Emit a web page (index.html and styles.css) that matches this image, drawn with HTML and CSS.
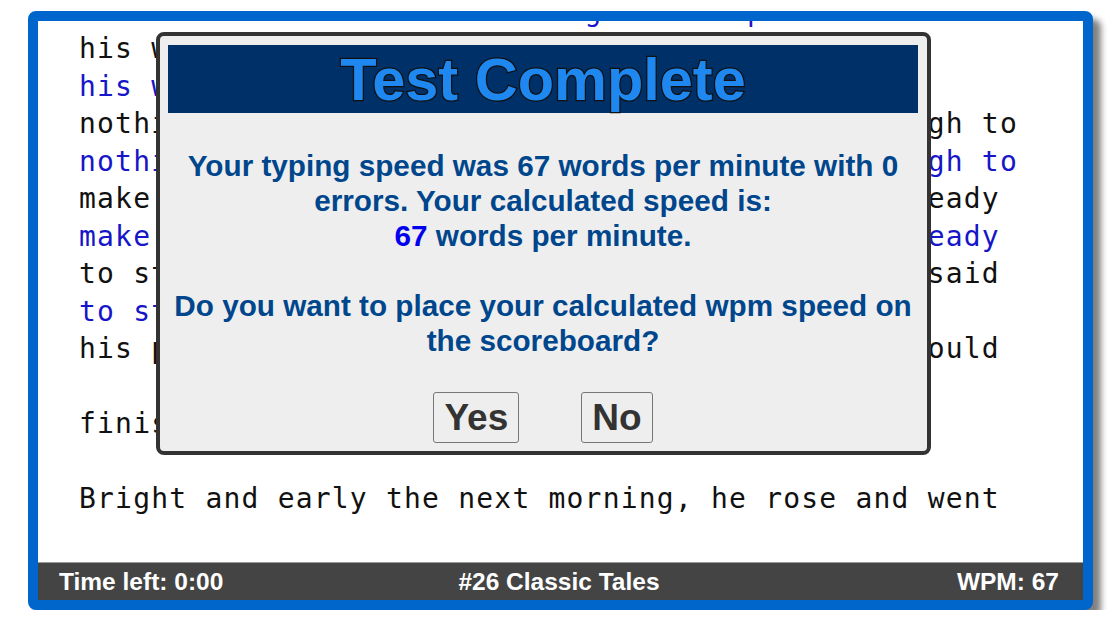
FILE: index.html
```html
<!DOCTYPE html>
<html lang="en">
<head>
    <meta charset="UTF-8">
    <title>Typing Test</title>
    <link rel="stylesheet" href="styles.css">
</head>
<body>

<div class="frame">
    <div class="page">
        <div class="lines">
            <div class="line">There lived a shoemaker who grew too poor to feed</div>
            <div class="line typed">There lived a shoemaker who grew too poor to feed</div>
            <div class="line">his wife and children, until at last he had</div>
            <div class="line typed">his wife and children, until at last he had</div>
            <div class="line">nothing left in the world but leather just enough to</div>
            <div class="line typed">nothing left in the world but leather just enough to</div>
            <div class="line">make a pair of shoes. He then cut the leather ready</div>
            <div class="line typed">make a pair of shoes. He then cut the leather ready</div>
            <div class="line">to stitch the next morning and went to bed. He said</div>
            <div class="line typed">to stitch the next morning and went</div>
            <div class="line">his prayers, went to sleep, and hoped that he could</div>
            <div class="line typed"></div>
            <div class="line">finish them in the morning.</div>
            <div class="line typed"></div>
            <div class="line">Bright and early the next morning, he rose and went</div>
            <div class="line typed"></div>
        </div>
    </div>
    <div class="status">
        <span>Time left: 0:00</span>
        <span class="status-title">#26 Classic Tales</span>
        <span class="status-wpm">WPM: 67</span>
    </div>
</div>

<div class="dialog">
    <div class="dialog-head">
        <h1>Test Complete</h1>
    </div>
    <p class="message">Your typing speed was 67 words per minute with 0 errors. Your calculated speed is:<br>
        <span class="score">67</span> words per minute.</p>
    <p class="message">Do you want to place your calculated wpm speed on the scoreboard?</p>
    <div class="actions">
        <button>Yes</button>
        <button>No</button>
    </div>
</div>

</body>
</html>
```

FILE: styles.css
```css
body { margin: 0; background: #fff; font-family: "Liberation Sans", Arial, sans-serif; }

.frame { width: 1045px; margin: 11px 0 0 28px; border: 10px solid #0066cc; border-radius: 8px; background: #fff; box-shadow: 8px 8px 6px #808080; overflow: hidden; }
.page { height: 541px; overflow: hidden; padding-left: 41px; border-bottom: 1px solid #9a9a9a; }
.lines { margin-top: -66px; }
.line { height: 37.5px; line-height: 37.5px; white-space: pre; font-family: "DejaVu Sans Mono", monospace; font-size: 28px; letter-spacing: 1.2px; color: #111; }
.line.typed { color: #1616c8; }

.status { display: grid; grid-template-columns: 1fr auto 1fr; align-items: center; height: 37px; padding: 0 24px 0 21px; background: #444; color: #fff; font-weight: bold; font-size: 24.5px; }
.status-wpm { text-align: right; }

.dialog { position: absolute; left: 156px; top: 32px; width: 775px; height: 423px; box-sizing: border-box; padding: 9px 9px 8px 8px; border: 4px solid #333; border-radius: 8px; background: #eee; text-align: center; }
.dialog-head { height: 68px; background: #003068; }
.dialog-head h1 { margin: 0; font-size: 59.5px; line-height: 70px; color: #1e88f0; -webkit-text-stroke: 2.5px #111; paint-order: stroke fill; }
.message { margin: 35px 0 0; font-size: 29.7px; font-weight: bold; line-height: 35px; color: #00468c; }
.score { color: #0000ee; }
.actions { display: flex; justify-content: center; gap: 62px; margin-top: 34px; }
.actions button { height: 51px; padding: 0 10px; font-family: "Liberation Sans", Arial, sans-serif; font-size: 37px; font-weight: bold; line-height: 49px; color: #333; background: #eee; border: 1px solid #777; border-radius: 3px; }
```
